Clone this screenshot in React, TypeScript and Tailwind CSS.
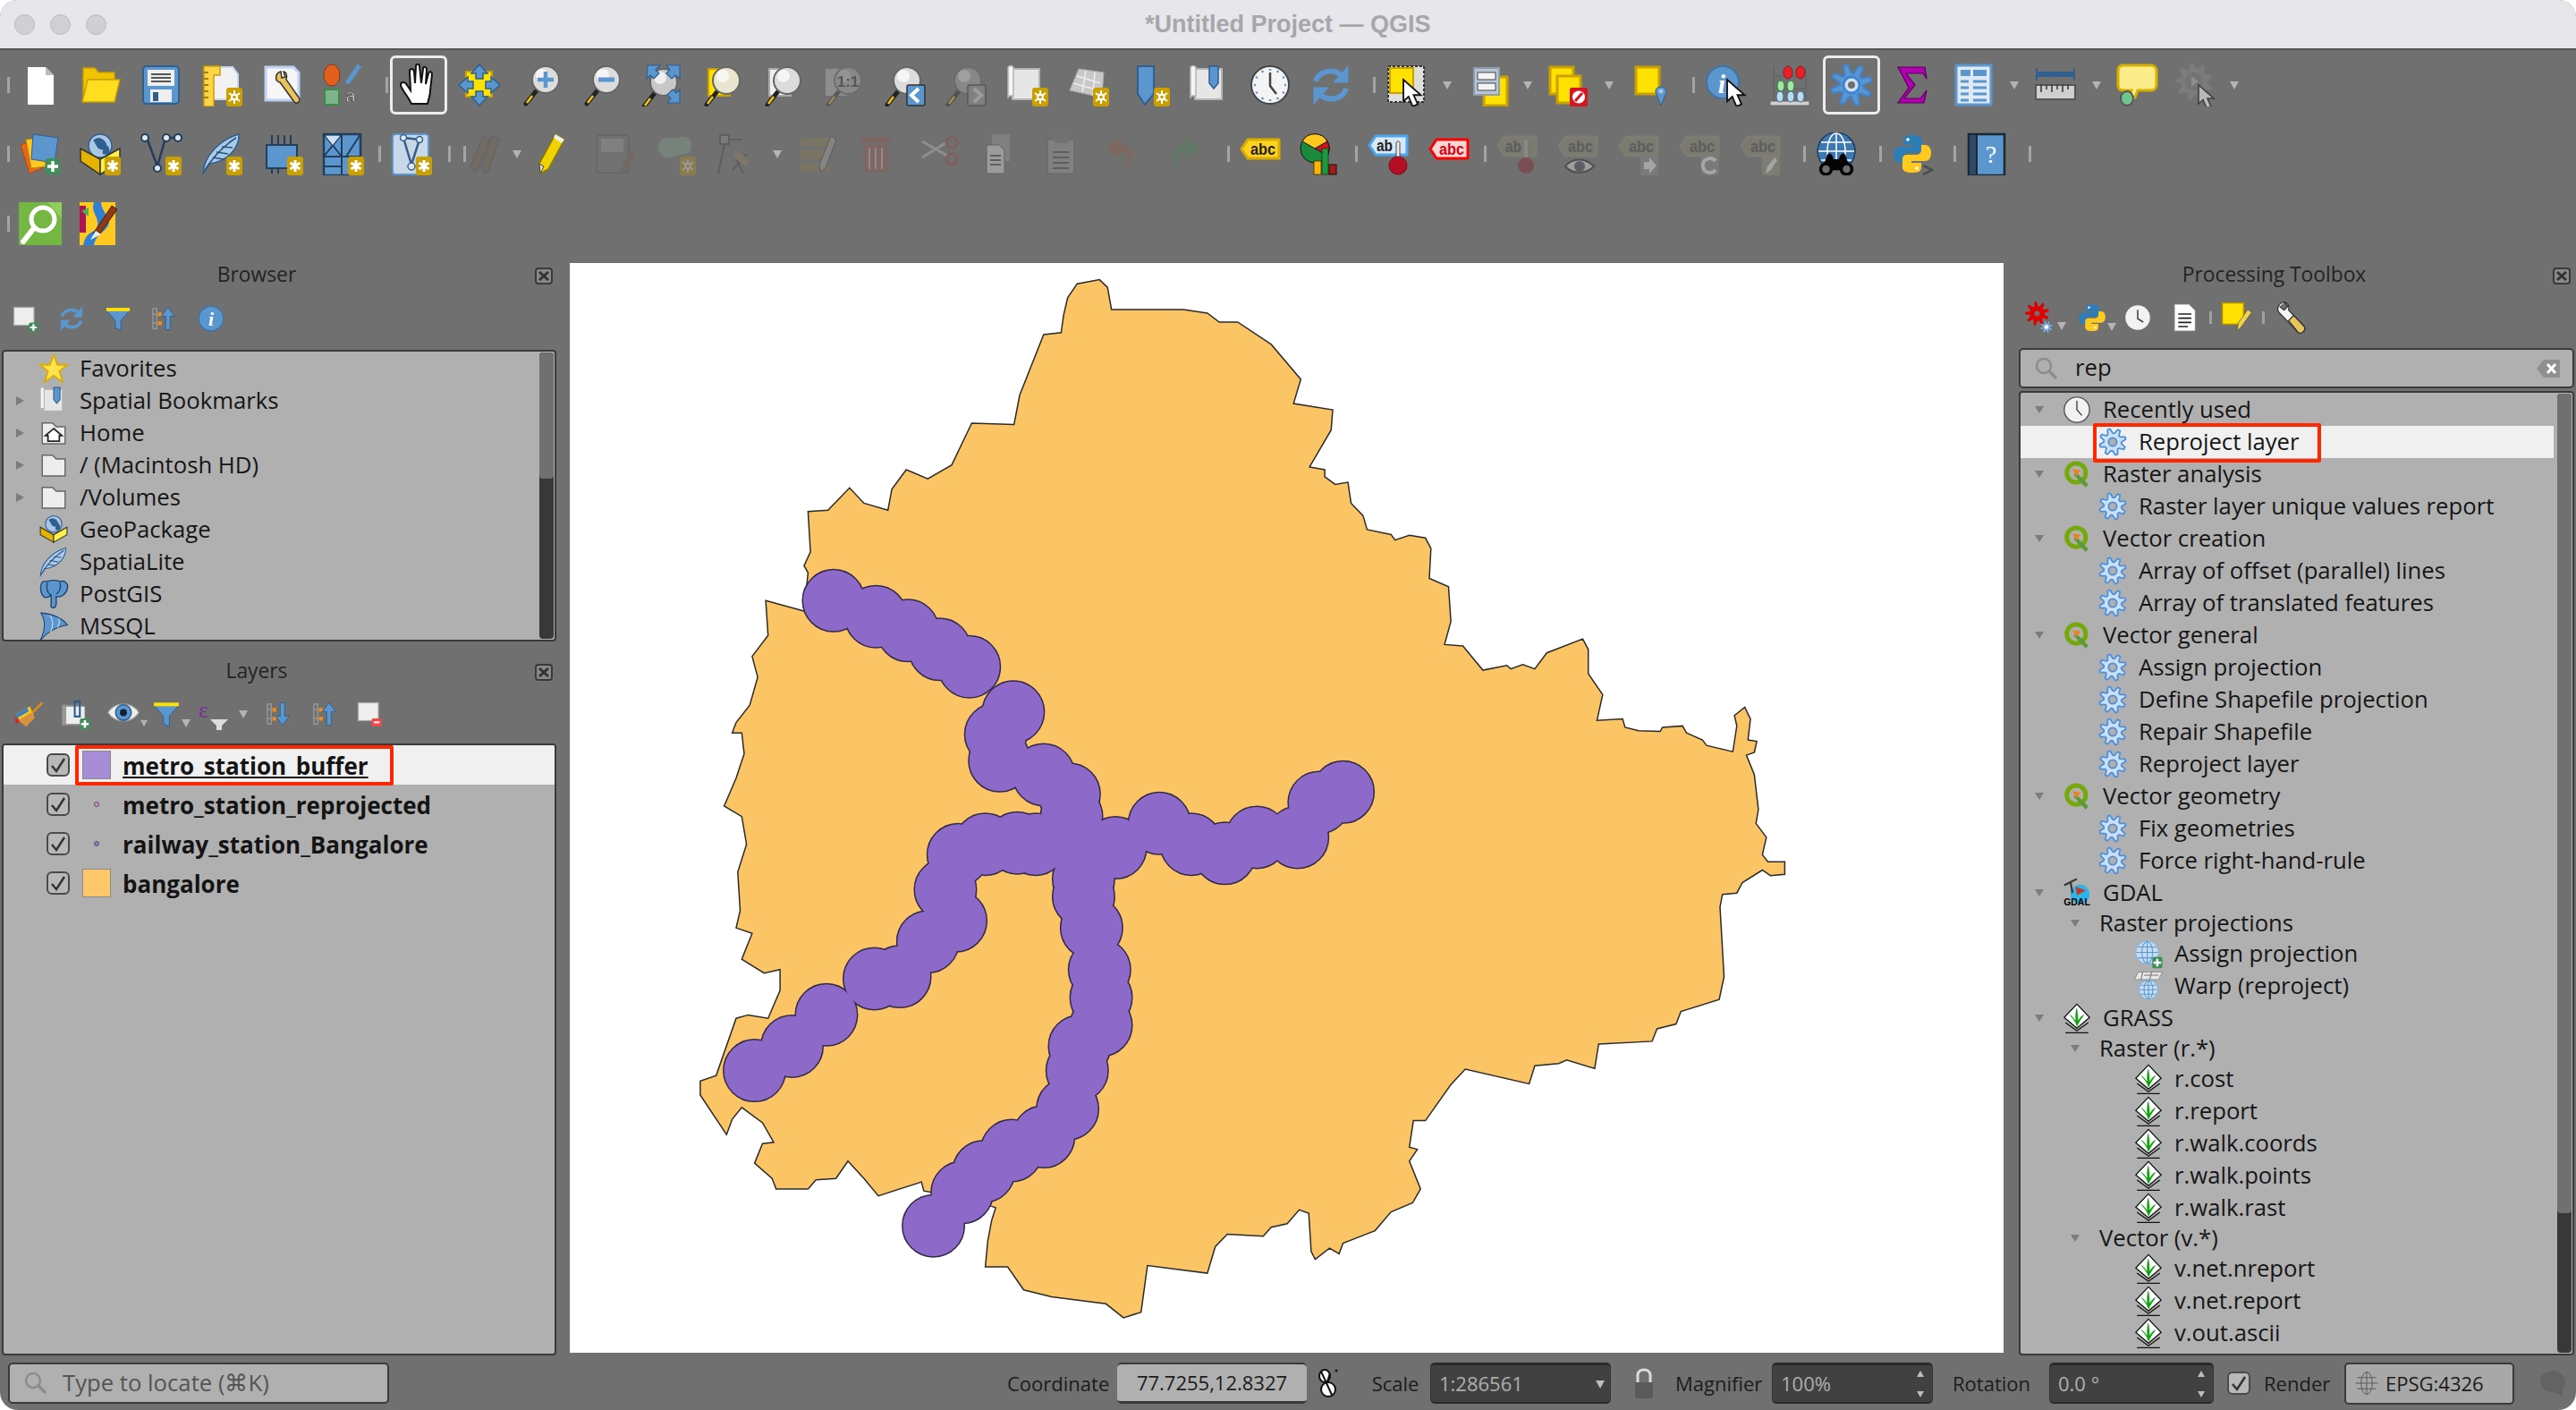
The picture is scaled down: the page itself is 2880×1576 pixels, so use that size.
import * as React from "react";

const UI = "[font-family:'Open_Sans',sans-serif]";

const Svg = ({ s = 48, children }: { s?: number; children: React.ReactNode }) => (
  <svg width={s} height={s} viewBox="0 0 48 48" className="block shrink-0">
    {children}
  </svg>
);

function gear(cx: number, cy: number, r: number, R: number, n: number) {
  let d = "";
  for (let i = 0; i < n * 4; i++) {
    const a = (i / (n * 4)) * Math.PI * 2 - Math.PI / 8;
    const rad = i % 4 < 2 ? R : r;
    d += `${i ? "L" : "M"}${(cx + Math.cos(a) * rad).toFixed(1)} ${(cy + Math.sin(a) * rad).toFixed(1)}`;
  }
  return d + "Z";
}

const BLUE = "#5b96cf";
const DARK = "#2f5f8f";

const Star = () => (
  <g>
    <rect x="29" y="27" width="18" height="21" rx="3" fill="#c9a000" />
    <path d="M38 31v13M32.5 34l11 7M43.5 34l-11 7" stroke="#fff" strokeWidth="3" />
  </g>
);
const GearBadge = ({ x = 0 }: { x?: number }) => (
  <g transform={`translate(${x} 0)`}>
    <rect x="29" y="27" width="18" height="21" rx="3" fill="#c9a000" />
    <path d="M38 30v15M32 33l12 9M44 33l-12 9" stroke="#fff" strokeWidth="2" />
    <circle cx="38" cy="37.5" r="4" fill="#fff" />
    <circle cx="38" cy="37.5" r="1.8" fill="#c9a000" />
  </g>
);
const Plus = ({ x = 38, y = 38 }: { x?: number; y?: number }) => (
  <g>
    <rect x={x - 8} y={y - 9} width="16" height="18" rx="3" fill="#3f8f58" />
    <path d={`M${x} ${y - 6}v12M${x - 6} ${y}h12`} stroke="#fff" strokeWidth="3.5" />
  </g>
);
const Cursor = ({ x, y, k = 1 }: { x: number; y: number; k?: number }) => (
  <path
    transform={`translate(${x} ${y}) scale(${k})`}
    d="M0 0V21L5 16.500L9 26L14 24L10 15H17Z"
    fill="#fff"
    stroke="#111"
    strokeWidth="1.600"
  />
);
const Mag = ({ lens = "#dcdcdc", hl = "#fff", cx = 29, cy = 19 }: { lens?: string; hl?: string; cx?: number; cy?: number }) => (
  <g>
    <path d={`M${cx - 10} ${cy + 12}L${cx - 22} ${cy + 27}`} stroke="#222" strokeWidth="5" strokeLinecap="round" />
    <path d={`M${cx - 15} ${cy + 18}L${cx - 21} ${cy + 26}`} stroke="#f5c518" strokeWidth="2.500" />
    <circle cx={cx} cy={cy} r="15" fill={lens} stroke="#666" strokeWidth="2" />
    <ellipse cx={cx - 4} cy={cy - 5} rx="7" ry="7" fill={hl} opacity=".7" />
  </g>
);
const Globe = ({ cx = 24, cy = 24, r = 14 }: { cx?: number; cy?: number; r?: number }) => (
  <g>
    <circle cx={cx} cy={cy} r={r} fill="#a9c6e4" stroke={DARK} strokeWidth="1.500" />
    <path
      d={`M${cx - r * 0.6} ${cy - r * 0.5}q${r * 0.5} -${r * 0.4} ${r * 0.9} 0t${r * 0.2} ${r * 0.7}t-${r * 0.7} 0z`}
      fill={DARK}
    />
    <path d={`M${cx + r * 0.3} ${cy - r * 0.1}q${r * 0.5} 0 ${r * 0.5} ${r * 0.5}t-${r * 0.6} ${r * 0.3}z`} fill={DARK} />
  </g>
);
const WireGlobe = ({ cx = 24, cy = 24, r = 16, st = "#fff" }: { cx?: number; cy?: number; r?: number; st?: string }) => (
  <g fill="none" stroke={st} strokeWidth="1.500">
    <ellipse cx={cx} cy={cy} rx={r * 0.5} ry={r} />
    <path d={`M${cx} ${cy - r}V${cy + r}M${cx - r} ${cy}H${cx + r}M${cx - r * 0.85} ${cy - r * 0.5}H${cx + r * 0.85}M${cx - r * 0.85} ${cy + r * 0.5}H${cx + r * 0.85}`} />
  </g>
);
const Scroll = () => (
  <g>
    <path d="M8 6H38V40H8Z" fill="#e6e6e6" stroke="#b4b4b4" strokeWidth="2" />
    <path d="M3 4q3 -3 6 0V36H6q-3 0 -3 3Z" fill="#f4f4f4" stroke="#b4b4b4" strokeWidth="1.500" />
  </g>
);
const Feather = () => (
  <g>
    <path d="M3 46C4 26 22 8 43 2C44 16 32 32 10 35Z" fill="#a9cbe9" stroke={DARK} strokeWidth="1.500" />
    <path d="M5 42C14 28 26 15 40 6M14 28l12 2M18 22l13 2M24 16l12 1" fill="none" stroke="#27527c" strokeWidth="1.500" />
  </g>
);
const Clock = () => (
  <g>
    <circle cx="24" cy="24" r="20" fill="#f2f2f2" stroke="#555" strokeWidth="2" />
    <path d="M24 10V24L32 33" fill="none" stroke="#444" strokeWidth="2" />
  </g>
);
const Folder = ({ x = 0 }: { x?: number }) => (
  <path d={`M${x + 6} 8H${x + 22}L${x + 28} 14H${x + 42}V41H${x + 6}Z`} fill="#ededed" stroke="#666" strokeWidth="2" />
);
const Python = () => (
  <g>
    <path d="M24 3C15 3 14 6 14 9V14H25V16H10C5 16 3 20 3 25S5 34 10 34H14V28C14 25 17 23 20 23H30C33 23 35 21 35 18V9C35 5 31 3 24 3Z" fill="#2f7db5" />
    <path d="M24 45C33 45 34 42 34 39V34H23V32H38C43 32 45 28 45 23S43 14 38 14H34V20C34 23 31 25 28 25H18C15 25 13 27 13 30V39C13 43 17 45 24 45Z" fill="#ffc91f" />
    <circle cx="19" cy="8" r="1.800" fill="#fff" />
    <circle cx="29" cy="40" r="1.800" fill="#fff" />
  </g>
);
const Tag = ({ bg, st, fg, t = "abc", y = 8 }: { bg: string; st: string; fg: string; t?: string; y?: number }) => (
  <g>
    <path d={`M10 ${y}H45V${y + 21}H10L3 ${y + 10.500}Z`} fill={bg} stroke={st} strokeWidth="3" strokeLinejoin="round" />
    <text x={t === "ab" ? 20 : 27} y={y + 16.500} textAnchor="middle" fontSize="18" fontWeight="700" fill={fg} fontFamily="'Liberation Sans',sans-serif" textLength={t === "ab" ? 18 : 28} lengthAdjust="spacingAndGlyphs">
      {t}
    </text>
  </g>
);
const Refresh = () => (
  <g fill="none" stroke={BLUE} strokeWidth="6">
    <path d="M7 20C10 9 26 4 37 14" />
    <path d="M41 28C38 39 22 44 11 34" />
    <path d="M43 3V21H27Z" fill={BLUE} strokeWidth="1" />
    <path d="M5 45V27H21Z" fill={BLUE} strokeWidth="1" />
  </g>
);
const TreeUp = ({ down = false }: { down?: boolean }) => (
  <g>
    <path d="M3 6H10V42H3M3 6V42M3 16H10M3 32H10" fill="none" stroke="#9c9c9c" strokeWidth="2" />
    <rect x="12" y="13" width="7" height="7" fill="#f08a1c" />
    <rect x="12" y="29" width="7" height="7" fill="#f08a1c" />
    <path d={down ? "M26 4H34V28H42L30 44L18 28H26Z" : "M26 44H34V20H42L30 4L18 20H26Z"} fill={BLUE} stroke={DARK} strokeWidth="1.500" />
  </g>
);
const Funnel = () => (
  <g>
    <path d="M3 9H45L29 28V46L19 40V28Z" fill={BLUE} stroke={DARK} strokeWidth="1.500" />
    <rect x="3" y="5" width="42" height="6" fill="#ffe100" />
  </g>
);
const Qgis = () => (
  <g>
    <circle cx="23" cy="22" r="15" fill="none" stroke="#75a80b" strokeWidth="7" />
    <path d="M22 20l20 20-4 5-19-20z" fill="#5d9b3a" />
    <path d="M17 16l13 2-7 9z" fill="#f0811a" />
  </g>
);
const Grass = () => (
  <g>
    <path d="M24 2L44 23L24 40L4 23Z" fill="#fff" stroke="#111" strokeWidth="1.800" />
    <path d="M24 38C22 28 14 22 12 18C18 22 20 26 22 28C21 20 22 12 24 7C25 14 26 20 26 28C28 24 31 20 36 18C32 24 27 30 24 38Z" fill="#0fa30f" />
    <path d="M6 31L24 44L42 31M6 47H42" fill="none" stroke="#111" strokeWidth="1.800" />
  </g>
);
const Gear = () => <path d={gear(24, 24, 14, 21, 8)} fill="#cddff2" stroke="#4a8fdc" strokeWidth="2.500" strokeLinejoin="round" />;
const TreeGear = () => (
  <g>
    <Gear />
    <circle cx="24" cy="24" r="6.500" fill="#b0b0b0" stroke="#4a8fdc" strokeWidth="2.500" />
  </g>
);
const Sep = ({ w }: { w: string }) => (
  <div className={`flex h-full items-center justify-end ${w}`}>
    <div className="h-[18px] w-[3px] bg-[#a4a4a4]" />
  </div>
);
const Drop = ({ w = "w-[24px]" }: { w?: string }) => (
  <div className={`flex h-full items-center justify-center ${w}`}>
    <svg width="10" height="10" viewBox="0 0 10 10" className="block">
      <path d="M0 1H10L5 10Z" fill="#b4b4b4" />
    </svg>
  </div>
);
const Ic = ({ w = "w-[68px]", children, on }: { w?: string; children: React.ReactNode; on?: boolean }) => (
  <div className={`flex h-full shrink-0 items-center justify-center ${w}`}>
    {on ? (
      <div className="flex h-[66px] w-[64px] items-center justify-center rounded-[6px] border-[3px] border-[#ececec]">{children}</div>
    ) : (
      children
    )}
  </div>
);
const Off = ({ children, o = 0.28 }: { children: React.ReactNode; o?: number }) => (
  <Svg>
    <g opacity={o}>{children}</g>
  </Svg>
);

function TopRow1() {
  return (
    <div className="flex h-[77px] pl-[8px]">
      <Sep w="w-[3px]" />
      <Ic w="w-[67px]"><Svg><path d="M10 4H30L39 13V46H10Z" fill="#fff" /><path d="M30 4L39 13H30Z" fill="#bbb" /></Svg></Ic>
      <Ic><Svg><path d="M5 5H18L22 10H40V18H11L5 42Z" fill="#f2c400" stroke="#c9a000" strokeWidth="1.500" /><path d="M10 18H46L40 43H4Z" fill="#ffdd1f" stroke="#c9a000" strokeWidth="1.500" /></Svg></Ic>
      <Ic><Svg><rect x="4" y="3" width="40" height="42" rx="4" fill={BLUE} stroke={DARK} strokeWidth="2" /><rect x="9" y="7" width="30" height="18" fill="#efefef" /><path d="M13 12H35M13 16H35M13 20H35" stroke="#555" strokeWidth="2" /><rect x="12" y="29" width="24" height="14" fill="#efefef" /><rect x="15" y="32" width="6" height="10" fill={DARK} /></Svg></Ic>
      <Ic><Svg><path d="M8 4H36L42 12V40H8Z" fill="#f2f2f2" stroke="#c8d8f0" strokeWidth="2" /><path d="M4 3H22V13H15V48H4Z" fill="#ffd447" stroke="#c9a000" strokeWidth="1.500" /><path d="M4 10H9M4 17H9M4 24H9M4 31H9M4 38H9" stroke="#a07f00" strokeWidth="2" /><GearBadge x={0} /></Svg></Ic>
      <Ic><Svg><path d="M5 4H36L42 10V41H5Z" fill="#f6f6f6" stroke="#bcd0f0" strokeWidth="3" /><path d="M22 9C15 11 15 20 21 21L37 43C40 46 45 42 42 38L28 18C30 12 27 9 25 9L27 15L23 16Z" fill="#e6c35c" stroke="#333" strokeWidth="1.500" /></Svg></Ic>
      <Ic><Svg><ellipse cx="11" cy="13" rx="9" ry="12" fill="#e3601c" stroke="#7d3d1a" strokeWidth="1" /><path d="M28 22L42 2" stroke={BLUE} strokeWidth="5" /><rect x="3" y="29" width="16" height="17" fill="#7fb48a" stroke="#3b8b4e" strokeWidth="2" /><text x="32" y="43" textAnchor="middle" fontSize="20" fill="#eee" fontFamily="'Liberation Sans',sans-serif" stroke="#333" strokeWidth=".6">a</text></Svg></Ic>
      <Sep w="w-[16px]" />
      <Ic on><Svg><path d="M16 45C12 36 4 28 4 24C4 20 9 20 11 24L15 30L14 9C14 5 18 5 19 9L20 22L21 3C21 0 25 0 25 3L27 22L29 6C29 3 33 3 33 7L32 23L35 11C36 8 39 9 39 12L37 30C37 36 35 40 34 45Z" fill="#fff" stroke="#111" strokeWidth="2" /></Svg></Ic>
      <Ic><Svg><rect x="9" y="9" width="29" height="28" fill="#ffe100" stroke="#c9a000" strokeWidth="2" /><path d="M24 1L33 11H28V17H20V11H15ZM24 47L33 37H28V31H20V37H15ZM1 24L11 15V20H17V28H11V33ZM47 24L37 15V20H31V28H37V33Z" fill={BLUE} stroke={DARK} strokeWidth="1.500" /></Svg></Ic>
      <Ic><Svg><Mag cx={30} cy={18} /><path d="M30 9V27M21 18H39" stroke={BLUE} strokeWidth="4.500" /></Svg></Ic>
      <Ic><Svg><Mag cx={30} cy={18} /><path d="M21 18H39" stroke={BLUE} strokeWidth="5" /></Svg></Ic>
      <Ic><Svg><Mag cx={26} cy={21} lens="#c8c8c8" /><path d="M8 2H22L17 7L21 11L15 17L11 13L7 17ZM44 2V17L39 13L35 17L29 11L33 7L29 2ZM44 44H30L34 39L30 35L36 29L40 33L44 29Z" fill={BLUE} stroke={DARK} strokeWidth="1.200" /></Svg></Ic>
      <Ic><Svg><rect x="8" y="6" width="24" height="30" fill="#ffe100" stroke="#c9a000" strokeWidth="2" /><Mag cx={28} cy={19} lens="#e9e5cf" /></Svg></Ic>
      <Ic><Svg><rect x="8" y="6" width="24" height="30" fill="#f0f0f0" stroke="#aaa" strokeWidth="2" /><Mag cx={28} cy={19} /></Svg></Ic>
      <Ic><Off><rect x="3" y="6" width="24" height="30" fill="#ddd" /><Mag cx={28} cy={19} lens="#ccc" /><text x="28" y="26" textAnchor="middle" fontSize="17" fontWeight="700" fill="#111" fontFamily="'Liberation Sans',sans-serif">1:1</text></Off></Ic>
      <Ic><Svg><Mag cx={26} cy={19} /><rect x="26" y="24" width="20" height="23" rx="2" fill={BLUE} stroke="#333" strokeWidth="1.500" /><path d="M39 28L31 35.500L39 43" fill="none" stroke="#fff" strokeWidth="4" /></Svg></Ic>
      <Ic><Off o={0.4}><Mag cx={26} cy={19} lens="#aaa" /><rect x="26" y="24" width="20" height="23" rx="2" fill="#999" stroke="#333" strokeWidth="1.500" /><path d="M33 28L41 35.500L33 43" fill="none" stroke="#ddd" strokeWidth="4" /></Off></Ic>
      <Ic><Svg><Scroll /><GearBadge x={1} /></Svg></Ic>
      <Ic><Svg><path d="M14 6L42 10L40 38L4 30Z" fill="#c8c8c8" stroke="#aaa" /><path d="M12 14L38 22M8 22L36 30M22 8L18 32M32 10L30 36" stroke="#eee" strokeWidth="1.500" fill="none" /><GearBadge x={1} /></Svg></Ic>
      <Ic><Svg><path d="M12 3H30V34L20 46L12 34Z" fill={BLUE} stroke={DARK} strokeWidth="2" /><GearBadge x={1} /></Svg></Ic>
      <Ic><Svg><Scroll /><path d="M24 3H34V22L29 28L24 22Z" fill={BLUE} stroke={DARK} strokeWidth="1.500" /></Svg></Ic>
      <Ic><Svg><circle cx="24" cy="24" r="21" fill="#f4f4f4" stroke="#444" strokeWidth="2" /><path d="M24 10V25L31 34" fill="none" stroke="#444" strokeWidth="2.500" /><path d="M24 6v2M24 40v2M6 24h2M40 24h2M33 8l-1 2M15 8l1 2M33 40l-1-2M15 40l1-2M40 15l-2 1M8 15l2 1M40 33l-2-1M8 33l2-1" stroke={BLUE} strokeWidth="2.500" /></Svg></Ic>
      <Ic><Svg><Refresh /></Svg></Ic>
      <Sep w="w-[16px]" />
      <Ic><Svg><rect x="4" y="3" width="40" height="40" fill="#dedede" stroke="#333" strokeWidth="2" strokeDasharray="3 2" /><rect x="6" y="5" width="26" height="28" fill="#ffe100" stroke="#c9a000" strokeWidth="2" /><Cursor x={21} y={18} k={1.150} /></Svg></Ic>
      <Drop w="w-[23px]" />
      <Ic w="w-[68px]"><Svg><rect x="20" y="15" width="26" height="32" fill="#ffe100" stroke="#c9a000" strokeWidth="3" /><rect x="9" y="5" width="28" height="30" fill="#b6c6d6" stroke="#8e9eae" strokeWidth="2" /><rect x="13" y="10" width="20" height="8" fill="#f4f4f4" stroke="#444" /><rect x="13" y="22" width="20" height="8" fill="#f4f4f4" stroke="#444" /></Svg></Ic>
      <Drop w="w-[22px]" />
      <Ic><Svg><rect x="4" y="4" width="26" height="30" fill="#ffe100" stroke="#c9a000" strokeWidth="3" /><rect x="12" y="14" width="26" height="30" fill="#ffe100" stroke="#c9a000" strokeWidth="3" /><rect x="26" y="27" width="20" height="21" rx="2" fill="#d5161f" /><circle cx="36" cy="37.500" r="7" fill="#fff" /><path d="M32 42L40 33" stroke="#d5161f" strokeWidth="3" /></Svg></Ic>
      <Drop />
      <Ic><Svg><rect x="8" y="4" width="26" height="30" fill="#ffe100" stroke="#c9a000" strokeWidth="3" /><path d="M36 47L30 32C29 24 42 24 42 32Z" fill={BLUE} stroke={DARK} strokeWidth="1" /><circle cx="36" cy="31" r="2.500" fill="#a9c6e4" /></Svg></Ic>
      <Sep w="w-[16px]" />
      <Ic w="w-[70px]"><Svg><circle cx="20" cy="21" r="18" fill={BLUE} stroke="#3e74a8" strokeWidth="2" /><text x="19" y="33" textAnchor="middle" fontSize="30" fontWeight="700" fontStyle="italic" fill="#fff" fontFamily="'Liberation Serif',serif">i</text><Cursor x={25} y={18} k={1.150} /></Svg></Ic>
      <Ic w="w-[71px]"><Svg><path d="M6 3V43M42 3V43M6 14H42M6 28H42" stroke="#666" strokeWidth="2" /><rect x="2" y="42" width="44" height="5" fill="#cfcfcf" stroke="#666" /><g stroke="#7d2020"><ellipse cx="22" cy="10" rx="5" ry="7" fill="#ee1c25" /><ellipse cx="36" cy="10" rx="5" ry="7" fill="#ee1c25" /></g><g stroke="#2d7a3b"><ellipse cx="14" cy="25" rx="4" ry="6" fill="#9fe89f" /><ellipse cx="25" cy="25" rx="4" ry="6" fill="#9fe89f" /></g><g stroke="#3d6a8f"><ellipse cx="13" cy="37" rx="4" ry="6" fill="#b8dcf2" /><ellipse cx="25" cy="37" rx="4" ry="6" fill="#b8dcf2" /><ellipse cx="36" cy="37" rx="4" ry="6" fill="#b8dcf2" /></g></Svg></Ic>
      <Ic on><Svg><path d={gear(24, 24, 13, 23, 8)} fill={BLUE} stroke="#3f85d6" strokeWidth="2" strokeLinejoin="round" /><circle cx="24" cy="24" r="9" fill="#cfe0f2" stroke="#3f85d6" strokeWidth="3" /><circle cx="24" cy="24" r="4" fill="#6e6e6e" /></Svg></Ic>
      <Ic><Svg><path d="M8 4H38L40 17L36 11H17L27 24L15 39H33L40 30L37 44H8L20 27Z" fill="#b000b0" stroke="#5a005a" strokeWidth="1.200" /></Svg></Ic>
      <Ic><Svg><rect x="5" y="2" width="39" height="44" fill="#dfe9f3" stroke={BLUE} strokeWidth="3" /><rect x="10" y="7" width="11" height="7" fill={BLUE} /><rect x="24" y="7" width="15" height="7" fill={BLUE} /><path d="M10 20H19M24 20H39M10 27H19M24 27H39M10 34H19M24 34H39M10 41H19M24 41H39" stroke={BLUE} strokeWidth="3" /></Svg></Ic>
      <Drop />
      <Ic><Svg><rect x="3" y="9" width="42" height="6" fill={DARK} /><path d="M3 5V19M45 5V19" stroke={DARK} strokeWidth="2" /><rect x="2" y="24" width="44" height="16" fill="#cfcfcf" stroke="#555" strokeWidth="2" /><path d="M8 24v8M14 24v5M20 24v8M26 24v5M32 24v8M38 24v5" stroke="#333" strokeWidth="1.500" /></Svg></Ic>
      <Drop />
      <Ic><Svg><path d="M8 2H38C42 2 45 4 45 8V24C45 28 42 30 38 30H24L21 38L12 43L17 30H8C4 30 2 28 2 24V8C2 4 4 2 8 2Z" fill="#fcec8a" stroke="#d8b000" strokeWidth="3" /><ellipse cx="12" cy="39" rx="7" ry="8" fill="#6fc58c" stroke="#555" strokeWidth="2" /></Svg></Ic>
      <Ic w="w-[62px]"><Off o={0.5}><path d={gear(22, 20, 15, 21, 9)} fill="#888" stroke="#777" /><circle cx="22" cy="20" r="10" fill="#777" /><path d="M19 14L27 20L19 26Z" fill="#aaa" /><Cursor x={27} y={24} k={1} /></Off></Ic>
      <Drop w="w-[24px]" />
    </div>
  );
}

const Abc = ({ children, t = "abc" }: { children?: React.ReactNode; t?: string }) => (
  <Ic>
    <Off o={0.42}>
      <Tag bg="#888872" st="#8f8f78" fg="#444" t={t} y={5} />
      {children}
    </Off>
  </Ic>
);

function TopRow2() {
  return (
    <div className="flex h-[78px] pl-[8px]">
      <Sep w="w-[3px]" />
      <Ic w="w-[67px]"><Svg><path d="M2 14L18 8L26 40L12 46Z" fill="#e8661c" stroke="#a8481a" /><path d="M8 8L26 6L30 38L14 40Z" fill="#ffc91f" stroke="#b68e00" /><path d="M16 2L44 6L40 34L14 30Z" fill={BLUE} stroke={DARK} /><Plus x={38} y={38} /></Svg></Ic>
      <Ic><Svg><Globe cx={24} cy={15} r={13} /><path d="M2 18L24 30V47L2 32Z" fill="#e6b400" stroke="#333" strokeWidth="1.500" /><path d="M46 18L24 30V47L46 32Z" fill="#fff04a" stroke="#333" strokeWidth="1.500" /><Star /></Svg></Ic>
      <Ic><Svg><path d="M8 6L20 38L29 6M29 6L42 6" fill="none" stroke="#233d5a" strokeWidth="2.500" /><circle cx="6" cy="6" r="4" fill="#dce8f3" stroke="#233d5a" strokeWidth="2" /><circle cx="20" cy="40" r="4" fill="#dce8f3" stroke="#233d5a" strokeWidth="2" /><circle cx="30" cy="6" r="4" fill="#dce8f3" stroke="#233d5a" strokeWidth="2" /><circle cx="43" cy="6" r="4" fill="#dce8f3" stroke="#233d5a" strokeWidth="2" /><Star /></Svg></Ic>
      <Ic><Svg><Feather /><Star /></Svg></Ic>
      <Ic><Svg><rect x="6" y="14" width="34" height="26" fill={BLUE} stroke="#233d5a" strokeWidth="2" /><path d="M12 3V14M19 3V14M26 3V14M33 3V14M12 40V46M19 40V46" stroke="#233d5a" strokeWidth="2" /><Star /></Svg></Ic>
      <Ic><Svg><rect x="2" y="2" width="41" height="46" fill={BLUE} stroke="#233d5a" strokeWidth="2.500" /><path d="M2 27H43M22 2V48M2 2L22 27M2 27L22 2M27 27L43 2M2 38H22" stroke="#233d5a" strokeWidth="2" /><path d="M4 4H20L12 14Z" fill="#cfe0f2" /><Star /></Svg></Ic>
      <Sep w="w-[8px]" />
      <Ic><Svg><rect x="3" y="2" width="40" height="45" rx="3" fill="#c8d8e8" stroke={BLUE} strokeWidth="2" /><path d="M15 6L24 36L33 8M15 6L33 8" fill="none" stroke="#345f88" strokeWidth="2.500" /><circle cx="15" cy="6" r="3.500" fill="#dce8f3" stroke="#345f88" strokeWidth="1.500" /><circle cx="33" cy="8" r="3.500" fill="#dce8f3" stroke="#345f88" strokeWidth="1.500" /><circle cx="24" cy="38" r="4" fill="#dce8f3" stroke="#345f88" strokeWidth="1.500" /><Star /></Svg></Ic>
      <Sep w="w-[10px]" />
      <Sep w="w-[17px]" />
      <Ic w="w-[50px]"><Off o={0.22}><path d="M8 44L4 38L18 4L26 8L12 42ZM20 46L16 40L28 4L36 8L24 44Z" fill="#7d5a3c" stroke="#333" /></Off></Ic>
      <Drop w="w-[14px]" />
      <Ic><Svg><path d="M9 46L8 35L26 2L36 8L18 41Z" fill="#f2d200" stroke="#8d7a00" strokeWidth="1.500" /><path d="M26 2L36 8L33 12L24 6Z" fill="#eee" /><path d="M9 46L8 35L13 38Z" fill="#ddd" stroke="#444" /></Svg></Ic>
      <Ic><Off><rect x="4" y="3" width="36" height="42" rx="4" fill="#777" stroke="#333" /><rect x="9" y="7" width="25" height="15" fill="#aaa" /><path d="M32 46L34 34L42 20L47 24L38 40Z" fill="#7d5a3c" /></Off></Ic>
      <Ic><Off><path d="M6 12C10 2 20 8 26 6C36 2 44 8 42 18C40 26 30 24 20 28C10 30 2 22 6 12Z" fill="#8bb09a" /><GearBadge x={0} /></Off></Ic>
      <Ic><Off><path d="M6 3H16V13H6ZM11 13L4 46M16 8H30M20 42L36 24M32 46L24 30" stroke="#333" strokeWidth="2" fill="#999" /><path d="M24 20L40 32L34 38L20 26Z" fill="#9c8a5c" /></Off></Ic>
      <Drop />
      <Ic><Off o={0.35}><rect x="4" y="6" width="32" height="10" fill="#8a7d50" /><rect x="4" y="20" width="32" height="10" fill="#8a7d50" /><rect x="4" y="34" width="32" height="10" fill="#8a7d50" /><path d="M26 44L25 36L38 4L44 8L32 40Z" fill="#aaa" stroke="#333" /></Off></Ic>
      <Ic><Off o={0.22}><rect x="4" y="5" width="32" height="6" fill="#b04a3a" /><path d="M6 14H34V44H6Z" fill="#b04a3a" /><path d="M13 17V41M20 17V41M27 17V41" stroke="#eee" strokeWidth="2" /></Off></Ic>
      <Ic><Off><path d="M4 10L32 26M4 28L30 12" stroke="#ddd" strokeWidth="3" /><circle cx="37" cy="11" r="6" fill="none" stroke="#b03030" strokeWidth="2.500" /><circle cx="37" cy="30" r="6" fill="none" stroke="#b03030" strokeWidth="2.500" /></Off></Ic>
      <Ic><Off o={0.4}><rect x="14" y="2" width="20" height="30" fill="#999" /><path d="M8 14H22L28 20V46H8Z" fill="#ddd" stroke="#444" /><path d="M12 26H24M12 31H24M12 36H24" stroke="#444" strokeWidth="2" /></Off></Ic>
      <Ic><Off o={0.4}><rect x="8" y="8" width="30" height="38" fill="#999" stroke="#555" /><rect x="16" y="2" width="16" height="10" fill="#777" /><path d="M14 22H32M14 28H32M14 34H32M14 40H32" stroke="#444" strokeWidth="2" /></Off></Ic>
      <Ic><Off o={0.3}><path d="M22 4L6 18L22 30V22C30 22 34 28 28 40C40 34 40 14 22 12Z" fill="#9c5b3c" /></Off></Ic>
      <Ic><Off o={0.3}><path d="M26 4L42 18L26 30V22C18 22 14 28 20 40C8 34 8 14 26 12Z" fill="#4a8a5a" /></Off></Ic>
      <Sep w="w-[18px]" />
      <Ic><Svg><Tag bg="#ffd21f" st="#d8ac00" fg="#222" /></Svg></Ic>
      <Ic w="w-[63px]"><Svg><circle cx="19" cy="18" r="16" fill="#1a8a3c" stroke="#111" /><path d="M19 18L19 2A16 16 0 0 1 33 26Z" fill="#c8161c" stroke="#111" /><path d="M19 18L5 10A16 16 0 0 1 33 10Z" fill="#ffc91f" stroke="#111" /><rect x="18" y="32" width="8" height="15" fill="#ffb400" stroke="#111" strokeWidth=".6" /><rect x="27" y="18" width="7" height="29" fill="#1a9a3c" stroke="#111" strokeWidth=".6" /><rect x="35" y="36" width="8" height="11" fill="#a81a1a" stroke="#111" /></Svg></Ic>
      <Sep w="w-[12px]" />
      <Ic><Svg><Tag bg="#d8e8f6" st="#4ba6ec" fg="#222" t="ab" y={4} /><path d="M33 13C32 9 38 9 37 13V30H33Z" fill="#eee" stroke="#444" /><circle cx="35" cy="37" r="10" fill="#b50f23" stroke="#7a0a18" /></Svg></Ic>
      <Ic><Svg><Tag bg="#fbd8d8" st="#f00" fg="#e0000c" /></Svg></Ic>
      <Sep w="w-[8px]" />
      <Abc t="ab"><path d="M32 11C31 7 37 7 36 11V28H32Z" fill="#aaa" /><circle cx="34" cy="37" r="9" fill="#8a2030" /></Abc>
      <Abc><path d="M10 38C18 28 32 28 42 38C32 47 18 47 10 38Z" fill="#ddd" stroke="#222" strokeWidth="2" /><circle cx="26" cy="38" r="6" fill="#445" /></Abc>
      <Abc><rect x="26" y="26" width="20" height="22" rx="2" fill="#888" /><path d="M30 33H36V28L44 37L36 46V41H30Z" fill="#eee" /></Abc>
      <Abc><rect x="26" y="26" width="20" height="22" rx="2" fill="#888" /><path d="M42 32A8 8 0 1 0 42 42" fill="none" stroke="#eee" strokeWidth="4" /></Abc>
      <Abc><rect x="26" y="26" width="20" height="22" rx="2" fill="#8f8f78" /><path d="M30 46L32 38L40 28L43 31L36 42Z" fill="#eee" /></Abc>
      <Sep w="w-[17px]" />
      <Ic><Svg><circle cx="24" cy="21" r="21" fill="#3f78b0" stroke="#1c3e60" strokeWidth="1.500" /><WireGlobe cx={24} cy={21} r={20} /><path d="M8 42L14 25C16 22 20 24 21 30H27C28 24 32 22 34 25L40 42Z" fill="#050505" /><circle cx="12.500" cy="41" r="6" fill="#6e6e6e" stroke="#050505" strokeWidth="3.500" /><circle cx="35.500" cy="41" r="6" fill="#6e6e6e" stroke="#050505" strokeWidth="3.500" /></Svg></Ic>
      <Sep w="w-[17px]" />
      <Ic><Svg><Python /><path d="M36 37L46 42L36 47" fill="none" stroke="#4c4c4c" strokeWidth="2.500" /></Svg></Ic>
      <Sep w="w-[15px]" />
      <Ic><Svg><rect x="4" y="2" width="40" height="46" fill={BLUE} stroke="#1b2733" strokeWidth="2.500" /><rect x="4" y="2" width="9" height="46" fill="#2f4a66" stroke="#1b2733" strokeWidth="2" /><text x="29" y="34" textAnchor="middle" fontSize="28" fill="#fff" fontFamily="'Liberation Serif',serif">?</text></Svg></Ic>
      <Sep w="w-[16px]" />
    </div>
  );
}

function TopRow3() {
  return (
    <div className="flex h-[78px] pl-[8px]">
      <Sep w="w-[3px]" />
      <Ic w="w-[67px]"><Svg><rect x="0" y="0" width="48" height="48" fill="#74b843" /><path d="M32 0L48 0V18Z" fill="#8fce5a" /><circle cx="27" cy="19" r="13" fill="none" stroke="#fff" strokeWidth="5" /><path d="M17 29L5 44" stroke="#fff" strokeWidth="6" strokeLinecap="round" /></Svg></Ic>
      <Ic w="w-[66px]"><Svg><rect x="2" y="0" width="40" height="48" fill="#ffc91f" /><path d="M2 4H9V34H2Z" fill="#b0144f" /><path d="M18 0C14 12 24 16 22 26S10 30 6 48H18C20 36 30 34 34 26S26 10 26 0Z" fill="#2f7fd5" /><path d="M4 10L12 6L12 16Z" fill="#4caf50" /><path d="M18 34L38 4L44 8L24 36L18 36Z" fill="#8f3a14" stroke="#4a1e08" /><path d="M14 42L20 32L26 36Z" fill="#eee" /></Svg></Ic>
    </div>
  );
}

const CloseBtn = () => (
  <svg width="22" height="22" viewBox="0 0 22 22" className="ml-[25px] mr-[3px] block shrink-0">
    <rect x="2" y="3" width="18" height="17" rx="3" fill="#888" stroke="#3a3a3a" strokeWidth="2" />
    <path d="M6 7L16 16M16 7L6 16" stroke="#333" strokeWidth="3" />
  </svg>
);

function DockHead({ title, mt = "" }: { title: string; mt?: string }) {
  return (
    <div className={`flex h-[27px] items-center ${mt}`}>
      <span className="flex-1 text-center text-[22.800px] text-[#242424]">{title}</span>
      <CloseBtn />
    </div>
  );
}

const Arrow = ({ down }: { down?: boolean }) => (
  <svg width="16" height="16" viewBox="0 0 16 16" className="block shrink-0">
    {down ? <path d="M3 4H13L8 12Z" fill="#7c7c7c" /> : <path d="M4 3L13 8L4 13Z" fill="#7c7c7c" />}
  </svg>
);

const Scrollbar = ({ thumb }: { thumb: string }) => (
  <div className="my-[1px] ml-[4px] mr-[1px] flex w-[16px] shrink-0 flex-col overflow-hidden rounded-[4px] bg-[#383838]">
    <div className={`rounded-[4px] bg-[#707070] ${thumb}`} />
  </div>
);

const browserRows: { t: string; arrow?: boolean; ic: React.ReactNode }[] = [
  { t: "Favorites", ic: <path d="M24 2L30 18H46L33 28L38 45L24 35L10 45L15 28L2 18H18Z" fill="#ffe14a" stroke="#d8ac00" strokeWidth="2.500" /> },
  { t: "Spatial Bookmarks", arrow: true, ic: <g><Scroll /><path d="M24 3H34V22L29 28L24 22Z" fill={BLUE} stroke={DARK} strokeWidth="1.500" /></g> },
  { t: "Home", arrow: true, ic: <g><Folder /><path d="M24 17L37 28H33V37H15V28H11Z" fill="#fff" stroke="#222" strokeWidth="2.500" /></g> },
  { t: "/ (Macintosh HD)", arrow: true, ic: <Folder /> },
  { t: "/Volumes", arrow: true, ic: <Folder /> },
  { t: "GeoPackage", ic: <g><Globe cx={24} cy={15} r={13} /><path d="M3 20L24 32V44L3 32Z" fill="#e6b400" stroke="#333" strokeWidth="1.500" /><path d="M45 20L24 32V44L45 32Z" fill="#fff04a" stroke="#333" strokeWidth="1.500" /></g> },
  { t: "SpatiaLite", ic: <Feather /> },
  { t: "PostGIS", ic: <g><path d="M8 4C2 6 2 22 8 28C12 32 16 28 20 26V44C24 48 28 44 28 40V28C36 30 44 24 46 14C47 6 40 2 34 4C28 2 20 2 14 4Z" fill={BLUE} stroke="#1e456b" strokeWidth="2" /><path d="M14 6C12 14 14 22 20 26M34 6C36 14 34 20 28 24" fill="none" stroke="#1e456b" strokeWidth="2" /></g> },
  { t: "MSSQL", ic: <g><path d="M4 3C20 4 36 10 46 22C30 24 14 34 3 46C10 32 12 16 4 3Z" fill={BLUE} stroke="#1e456b" strokeWidth="1.500" /><path d="M18 7C24 14 24 22 19 34M32 12C34 18 33 20 30 26" fill="none" stroke="#cfe0f2" strokeWidth="1.500" /></g> },
];

function BrowserPanel() {
  return (
    <>
      <DockHead title="Browser" />
      <div className="flex h-[70px] items-center">
        {[
          <g key="a"><rect x="4" y="4" width="36" height="32" fill="#eee" stroke="#aaa" strokeWidth="2" /><Plus x={39} y={40} /></g>,
          <Refresh key="b" />,
          <Funnel key="c" />,
          <TreeUp key="d" />,
          <g key="e"><circle cx="24" cy="24" r="22" fill={BLUE} stroke="#3e74a8" strokeWidth="2" /><text x="24" y="37" textAnchor="middle" fontSize="34" fontWeight="700" fontStyle="italic" fill="#fff" fontFamily="'Liberation Serif',serif">i</text></g>,
        ].map((g, i) => (
          <div key={i} className="flex w-[52px] justify-center"><Svg s={30}>{g}</Svg></div>
        ))}
      </div>
      <div className="flex h-[326px] overflow-hidden rounded-[4px] border-2 border-[#3a3a3a] bg-[#b0b0b0]">
        <div className="min-w-0 flex-1 pt-[1px]">
          {browserRows.map((r) => (
            <div key={r.t} className="flex h-[36px] items-center pl-[10px]">
              <div className="w-[16px] shrink-0">{r.arrow && <Arrow />}</div>
              <div className="ml-[13px] mr-[12px] w-[34px] shrink-0"><Svg s={34}>{r.ic}</Svg></div>
              <span className="whitespace-nowrap text-[25.700px] text-[#161616]">{r.t}</span>
            </div>
          ))}
        </div>
        <Scrollbar thumb="h-[141px]" />
      </div>
    </>
  );
}

const Check = () => (
  <svg width="26" height="26" viewBox="0 0 26 26" className="block shrink-0">
    <rect x="1" y="1" width="24" height="24" rx="5" fill="#b8b8b8" stroke="#4a4a4a" strokeWidth="2" />
    <path d="M6 14L11 20L20 6" fill="none" stroke="#333" strokeWidth="2.500" />
  </svg>
);

function LayerRow({ name, swatch, dot, sel }: { name: string; swatch?: string; dot?: string; sel?: boolean }) {
  return (
    <div className={`relative flex h-[44px] items-center pl-[48px] ${sel ? "bg-[#f0f0f0]" : ""}`}>
      <Check />
      <div className="ml-[14px] mr-[13px] flex h-[32px] w-[32px] shrink-0 items-center justify-center">
        {swatch ? (
          <div className={`h-[32px] w-[32px] border border-[#8a8a8a] ${swatch}`} />
        ) : (
          <div className={`h-[6px] w-[6px] rounded-full border border-[#555] ${dot}`} />
        )}
      </div>
      <span className={`whitespace-nowrap pt-[2px] text-[26px] font-bold text-[#141414] ${sel ? "underline" : ""}`}>{name}</span>
      {sel && <div className="absolute left-[80px] top-0 h-[45px] w-[356px] rounded-[2px] border-[4px] border-[#ff2600]" />}
    </div>
  );
}

function LayersPanel() {
  return (
    <>
      <DockHead title="Layers" mt="mt-[20px]" />
      <div className="flex h-[67px] items-center">
        <div className="ml-[13px] w-[34px]"><Svg s={34}><path d="M4 24L26 12L32 26L12 38Z" fill="#f5c518" /><path d="M4 24L22 14L24 20L6 30Z" fill="#3f7fc5" /><path d="M8 34L28 22L34 30L20 44Z" fill="#d9923f" /><path d="M30 22L46 6" stroke="#d98a1f" strokeWidth="4" /><path d="M2 28L10 36L4 40Z" fill="#e02020" /></Svg></div>
        <div className="ml-[19px] w-[34px]"><Svg s={34}><rect x="2" y="10" width="32" height="32" fill="#999" stroke="#888" /><rect x="8" y="12" width="30" height="28" fill="#eee" stroke="#888" /><path d="M22 4H30V28H22Z" fill="none" stroke={DARK} strokeWidth="3" /><Plus x={38} y={40} /></Svg></div>
        <div className="ml-[17px] flex w-[46px]"><Svg s={38}><path d="M2 22C12 6 36 6 46 22C36 38 12 38 2 22Z" fill="#eee" stroke="#999" strokeWidth="1.500" /><circle cx="24" cy="22" r="11" fill={BLUE} stroke="#2f5f8f" strokeWidth="2" /><circle cx="24" cy="22" r="5" fill="#123" /></Svg><div className="mt-[20px]"><Drop w="w-[8px]" /></div></div>
        <div className="ml-[5px] flex w-[46px]"><Svg s={32}><Funnel /></Svg><div className="mt-[20px]"><Drop w="w-[12px]" /></div></div>
        <div className="ml-[5px] flex w-[36px]"><svg width="36" height="36" viewBox="0 0 36 36" className="block"><text x="1" y="22" fontSize="26" fill="#7a2f8f" fontFamily="'Liberation Serif',serif">ε</text><path d="M14 24H34L27 31V36H21V31Z" fill="#ddd" /></svg></div>
        <Drop w="w-[30px]" />
        <div className="ml-[10px] w-[30px]"><Svg s={30}><TreeUp down /></Svg></div>
        <div className="ml-[22px] w-[30px]"><Svg s={30}><TreeUp /></Svg></div>
        <div className="ml-[19px] w-[30px]"><Svg s={30}><rect x="4" y="4" width="36" height="32" fill="#eee" stroke="#aaa" strokeWidth="2" /><rect x="28" y="32" width="18" height="14" rx="3" fill="#f04a4a" /><path d="M32 39H42" stroke="#fff" strokeWidth="3" /></Svg></div>
      </div>
      <div className="h-[684px] overflow-hidden rounded-[4px] border-2 border-[#3a3a3a] bg-[#b0b0b0]">
        <LayerRow name="metro_station_buffer" swatch="bg-[#a78cd6]" sel />
        <LayerRow name="metro_station_reprojected" dot="bg-[#d48ad4]" />
        <LayerRow name="railway_station_Bangalore" dot="bg-[#8d7ad4]" />
        <LayerRow name="bangalore" swatch="bg-[#fdc76a]" />
      </div>
    </>
  );
}

const outline: [number, number][] = [
  [612, 105], [615, 80], [620, 55], [632, 35], [660, 29], [670, 40], [675, 72], [735, 72], [765, 72], [795, 77], [810, 90], [833, 90], [875, 122], [912, 172], [903, 207], [952, 216], [950, 245], [923, 298], [942, 302], [942, 312], [955, 323], [971, 320], [975, 350], [990, 368], [995, 388], [1025, 395], [1030, 403], [1048, 396], [1068, 400], [1075, 415], [1073, 458], [1097, 470], [1100, 520], [1092, 553], [1115, 555], [1140, 590], [1170, 583], [1175, 588], [1190, 582], [1205, 588], [1220, 565], [1265, 545], [1272, 560], [1272, 595], [1290, 625], [1283, 662], [1315, 660], [1318, 672], [1335, 677], [1362, 678], [1365, 672], [1390, 670], [1395, 680], [1415, 690], [1420, 698], [1453, 707], [1458, 670], [1455, 655], [1468, 643], [1475, 660], [1472, 690], [1483, 692], [1480, 708], [1470, 712], [1480, 740], [1485, 790], [1482, 810], [1495, 830], [1490, 855], [1497, 865], [1518, 865], [1518, 883], [1500, 885], [1490, 877], [1465, 895], [1458, 910], [1440, 912], [1437, 930], [1442, 1030], [1436, 1063], [1388, 1080], [1382, 1098], [1358, 1105], [1352, 1123], [1285, 1127], [1280, 1162], [1245, 1150], [1235, 1155], [1205, 1158], [1198, 1184], [1118, 1163], [1100, 1185], [1068, 1237], [1053, 1237], [1048, 1275], [1058, 1278], [1048, 1295], [1062, 1335], [1052, 1355], [1025, 1368], [1005, 1395], [965, 1413], [960, 1428], [948, 1420], [930, 1436], [925, 1425], [922, 1370], [910, 1365], [895, 1385], [875, 1390], [865, 1403], [820, 1400], [805, 1418], [795, 1456], [720, 1445], [712, 1512], [690, 1520], [668, 1500], [600, 1490], [565, 1480], [545, 1447], [517, 1447], [520, 1410], [525, 1380], [530, 1362], [500, 1350], [440, 1338], [437, 1325], [383, 1345], [365, 1320], [345, 1295], [330, 1320], [305, 1322], [295, 1335], [255, 1335], [250, 1320], [228, 1298], [238, 1270], [252, 1268], [238, 1240], [212, 1218], [200, 1235], [193, 1257], [160, 1200], [160, 1180], [180, 1172], [205, 1090], [220, 1085], [245, 1090], [260, 1050], [260, 1020], [240, 1025], [212, 1005], [225, 968], [205, 960], [210, 935], [207, 880], [218, 840], [212, 800], [190, 785], [205, 745], [215, 710], [212, 680], [200, 680], [205, 665], [222, 640], [232, 600], [225, 570], [245, 540], [242, 490], [290, 505], [295, 450], [290, 440], [298, 420], [295, 362], [320, 360], [347, 328], [365, 350], [395, 360], [400, 330], [418, 302], [445, 315], [475, 295], [500, 235], [553, 237], [560, 195], [590, 108],
];
const buffers: [number, number][] = [
  [327, 490], [380, 513], [420, 533], [460, 560], [497, 585],
  [552, 650], [530, 682], [535, 720], [590, 740], [622, 768], [625, 800], [640, 850],
  [580, 840], [557, 838], [517, 840], [483, 855], [467, 905], [480, 950], [445, 980], [410, 1030], [378, 1033],
  [318, 1085], [275, 1130], [228, 1165],
  [680, 845], [735, 810], [775, 840], [817, 853], [857, 830], [908, 830], [935, 780], [965, 765],
  [640, 890], [640, 915], [650, 960], [660, 1020], [662, 1060], [662, 1100], [635, 1130], [632, 1165], [620, 1220], [590, 1260], [550, 1280], [515, 1310], [488, 1340], [452, 1388],
];
const px = (x: number) => 3 + x / 1.12;
const py = (y: number) => -4 + y / 1.285;

function MapCanvas() {
  return (
    <div className="h-[1218px] w-[1603px] shrink-0 bg-white">
      <svg width="1603" height="1218" viewBox="0 0 1603 1218" className="block">
        <polygon points={outline.map(([x, y]) => `${px(x).toFixed(1)},${py(y).toFixed(1)}`).join(" ")} fill="#fbc566" stroke="#2b2b2b" strokeWidth="1.500" />
        {buffers.map(([x, y], i) => (
          <circle key={i} cx={px(x)} cy={py(y)} r="34.500" fill="#8d69c9" stroke="#332a4a" strokeWidth="2" />
        ))}
        {buffers.map(([x, y], i) => (
          <circle key={i} cx={px(x)} cy={py(y)} r="34" fill="#8d69c9" />
        ))}
      </svg>
    </div>
  );
}

type Kind = "group" | "leaf1" | "sub" | "leaf2";
const GRASS = <Grass />;
const toolRows: { k: Kind; t: string; ic?: React.ReactNode; sel?: boolean }[] = [
  { k: "group", t: "Recently used", ic: <Clock /> },
  { k: "leaf1", t: "Reproject layer", sel: true },
  { k: "group", t: "Raster analysis", ic: <Qgis /> },
  { k: "leaf1", t: "Raster layer unique values report" },
  { k: "group", t: "Vector creation", ic: <Qgis /> },
  { k: "leaf1", t: "Array of offset (parallel) lines" },
  { k: "leaf1", t: "Array of translated features" },
  { k: "group", t: "Vector general", ic: <Qgis /> },
  { k: "leaf1", t: "Assign projection" },
  { k: "leaf1", t: "Define Shapefile projection" },
  { k: "leaf1", t: "Repair Shapefile" },
  { k: "leaf1", t: "Reproject layer" },
  { k: "group", t: "Vector geometry", ic: <Qgis /> },
  { k: "leaf1", t: "Fix geometries" },
  { k: "leaf1", t: "Force right-hand-rule" },
  {
    k: "group",
    t: "GDAL",
    ic: (
      <g>
        <circle cx="29" cy="26" r="15" fill="#2fb4e8" />
        <path d="M4 12L24 2M14 7L17 24" stroke="#333" strokeWidth="3" />
        <path d="M22 14L38 20L24 28Z" fill="#c0392b" />
        <text x="24" y="44" textAnchor="middle" fontSize="15" fontWeight="700" fill="#000" fontFamily="'Liberation Sans',sans-serif" textLength="42" lengthAdjust="spacingAndGlyphs">GDAL</text>
      </g>
    ),
  },
  { k: "sub", t: "Raster projections" },
  { k: "leaf2", t: "Assign projection", ic: <g><circle cx="22" cy="22" r="18" fill="#c6def4" stroke="#8ab4dc" strokeWidth="1.500" /><WireGlobe cx={22} cy={22} r={17} st="#5b96cf" /><Plus x={38} y={38} /></g> },
  { k: "leaf2", t: "Warp (reproject)", ic: <g><circle cx="24" cy="30" r="15" fill="#c6def4" stroke="#8ab4dc" strokeWidth="1.500" /><WireGlobe cx={24} cy={30} r={14} st="#5b96cf" /><path d="M8 2H46L40 14H2Z" fill="#e6e6e6" stroke="#777" strokeWidth="1" /><path d="M15 2L12 14M29 2L26 14M17 7H40" stroke="#777" strokeWidth="1.500" /></g> },
  { k: "group", t: "GRASS", ic: GRASS },
  { k: "sub", t: "Raster (r.*)" },
  { k: "leaf2", t: "r.cost", ic: GRASS },
  { k: "leaf2", t: "r.report", ic: GRASS },
  { k: "leaf2", t: "r.walk.coords", ic: GRASS },
  { k: "leaf2", t: "r.walk.points", ic: GRASS },
  { k: "leaf2", t: "r.walk.rast", ic: GRASS },
  { k: "sub", t: "Vector (v.*)" },
  { k: "leaf2", t: "v.net.nreport", ic: GRASS },
  { k: "leaf2", t: "v.net.report", ic: GRASS },
  { k: "leaf2", t: "v.out.ascii", ic: GRASS },
];

function ToolRow({ k, t, ic, sel }: { k: Kind; t: string; ic?: React.ReactNode; sel?: boolean }) {
  const icon = <div className="mr-[12px] w-[34px] shrink-0"><Svg s={34}>{ic ?? <TreeGear />}</Svg></div>;
  const text = <span className="whitespace-nowrap text-[25.700px] text-[#161616]">{t}</span>;
  if (k === "group")
    return (
      <div className="flex h-[36px] items-center pl-[13px]">
        <div className="mr-[17px]"><Arrow down /></div>
        {icon}
        {text}
      </div>
    );
  if (k === "sub")
    return (
      <div className="flex h-[32px] items-center pl-[53px]">
        <div className="mr-[19px]"><Arrow down /></div>
        {text}
      </div>
    );
  return (
    <div className={`relative flex h-[36px] items-center ${k === "leaf1" ? "pl-[86px]" : "pl-[126px]"} ${sel ? "bg-[#f0f0f0]" : ""}`}>
      {icon}
      {text}
      {sel && <div className="absolute left-[81px] top-[-3px] h-[44px] w-[255px] rounded-[2px] border-[4px] border-[#ff2600]" />}
    </div>
  );
}

function ToolboxPanel() {
  return (
    <>
      <DockHead title="Processing Toolbox" />
      <div className="flex h-[68px] items-center pl-[7px]">
        <div className="flex w-[58px] items-end"><svg width="36" height="36" viewBox="0 0 48 48" className="block shrink-0"><path d={gear(18, 18, 11, 18, 9)} fill="#e00000" /><circle cx="18" cy="18" r="4" fill="#6e6e6e" /><path d={gear(32, 38, 5, 9, 8)} fill="#7db0e8" /><circle cx="32" cy="38" r="3" fill="#fff" /></svg><div className="mb-[4px]"><Drop w="w-[10px]" /></div></div>
        <div className="flex w-[44px] items-end"><Svg s={34}><Python /></Svg><div className="mb-[2px]"><Drop w="w-[10px]" /></div></div>
        <div className="flex w-[48px] justify-center"><Svg s={30}><circle cx="24" cy="24" r="22" fill="#f2f2f2" /><path d="M24 10V26L34 32" fill="none" stroke="#444" strokeWidth="2.500" /></Svg></div>
        <div className="flex w-[56px] justify-center"><Svg s={32}><path d="M8 2H32L42 12V46H8Z" fill="#fff" stroke="#bbb" /><path d="M14 18H36M14 25H36M14 32H36M14 39H30" stroke="#222" strokeWidth="2.500" /></Svg></div>
        <div className="h-[14px] w-[3px] bg-[#a0a0a0]" />
        <div className="flex w-[56px] justify-center"><Svg s={36}><rect x="2" y="2" width="32" height="32" fill="#ffe100" stroke="#a98f00" strokeWidth="2" /><path d="M24 44L26 32L40 12L46 16L30 38Z" fill="#f2d24a" stroke="#555" /></Svg></div>
        <div className="h-[14px] w-[3px] bg-[#a0a0a0]" />
        <div className="ml-[10px]"><Svg s={40}><path d="M15 3C6 4 3 13 8 18L12 22L33 44C37 47 44 41 41 36L20 14C22 8 18 3 14 3L19 9L14 14L8 9" fill="#f4f4f4" stroke="#333" strokeWidth="1.500" /><path d="M20 28L33 44C37 47 44 41 41 36L27 21Z" fill="#e6c35c" stroke="#333" strokeWidth="1.500" /></Svg></div>
      </div>
      <div className="flex h-[45px] items-center rounded-[5px] border-2 border-[#3a3a3a] bg-[#b0b0b0] pl-[16px] pr-[14px]">
        <svg width="26" height="26" viewBox="0 0 26 26" className="block shrink-0"><circle cx="10" cy="10" r="8" fill="none" stroke="#8d8d8d" strokeWidth="2.500" /><path d="M16 16L24 24" stroke="#8d8d8d" strokeWidth="3.500" /></svg>
        <span className="ml-[19px] flex-1 text-[25.700px] text-[#161616]">rep</span>
        <svg width="26" height="20" viewBox="0 0 26 20" className="block shrink-0"><path d="M8 0H26V20H8L0 10Z" fill="#8f8f8f" /><path d="M12 5L21 15M21 5L12 15" stroke="#fff" strokeWidth="3" /></svg>
      </div>
      <div className="mt-[3px] flex h-[1078px] overflow-hidden rounded-[4px] border-2 border-[#3a3a3a] bg-[#b0b0b0]">
        <div className="min-w-0 flex-1 pt-[1px]">
          {toolRows.map((r, i) => (
            <ToolRow key={i} {...r} />
          ))}
        </div>
        <Scrollbar thumb="h-[916px]" />
      </div>
    </>
  );
}

const Label = ({ w, t }: { w: string; t: string }) => (
  <span className={`whitespace-nowrap text-center text-[22px] text-[#1c1c1c] ${w}`}>{t}</span>
);
const DarkBox = ({ w, ml, t, spin, combo }: { w: string; ml: string; t: string; spin?: boolean; combo?: boolean }) => (
  <div className={`flex h-[46px] shrink-0 items-center rounded-[5px] border-x border-b-[2px] border-t-[3px] border-b-[#2a2a2a] border-t-[#2a2a2a] border-x-[#333] bg-[#414141] pl-[9px] pr-[6px] text-[22px] text-[#aeaeae] ${w} ${ml}`}>
    <span className="flex-1">{t}</span>
    {spin && (
      <svg width="14" height="34" viewBox="0 0 14 34" className="block"><path d="M3 9L7 2L11 9ZM3 25L11 25L7 32Z" fill="#bdbdbd" /></svg>
    )}
    {combo && <svg width="10" height="10" viewBox="0 0 10 10" className="block"><path d="M0 1H10L5 10Z" fill="#bdbdbd" /></svg>}
  </div>
);

function StatusBar() {
  return (
    <div className="flex h-[61px] items-center pl-[9px] pt-[1px]">
      <div className="flex h-[46px] w-[426px] shrink-0 items-center rounded-[5px] border-2 border-[#3a3a3a] bg-[#b0b0b0] pl-[16px]">
        <svg width="26" height="26" viewBox="0 0 26 26" className="block shrink-0"><circle cx="10" cy="10" r="8" fill="none" stroke="#8d8d8d" strokeWidth="2.500" /><path d="M16 16L24 24" stroke="#8d8d8d" strokeWidth="3.500" /></svg>
        <span className="ml-[17px] whitespace-nowrap text-[25.700px] text-[#555]">Type to locate (⌘K)</span>
      </div>
      <div className="ml-[691px]"><Label w="block w-[111px]" t="Coordinate" /></div>
      <div className="ml-[12px] flex h-[46px] w-[212px] shrink-0 items-center justify-center rounded-[5px] border-b-[3px] border-t-[2px] border-[#3a3a3a] bg-[#b0b0b0] text-[22px] text-[#1c1c1c]">77.7255,12.8327</div>
      <div className="ml-[12px] w-[24px]"><svg width="24" height="34" viewBox="0 0 24 34" className="block"><ellipse cx="8" cy="9" rx="6" ry="7" fill="#fff" stroke="#111" strokeWidth="2" /><ellipse cx="12" cy="24" rx="8" ry="8" fill="#fff" stroke="#111" strokeWidth="2" /><path d="M4 4L16 30M14 6L10 18" stroke="#111" strokeWidth="2" /><circle cx="21" cy="3" r="1.500" fill="#111" /></svg></div>
      <div className="ml-[34px]"><Label w="block w-[58px]" t="Scale" /></div>
      <DarkBox w="w-[202px]" ml="ml-[10px]" t="1:286561" combo />
      <div className="ml-[24px] w-[26px]"><svg width="26" height="38" viewBox="0 0 26 38" className="block"><path d="M6 18V10C6 2 20 2 20 10V18" fill="none" stroke="#dcdcdc" strokeWidth="3" /><rect x="3" y="18" width="20" height="18" rx="2" fill="#5a5a5a" /></svg></div>
      <div className="ml-[22px]"><Label w="block w-[97px]" t="Magnifier" /></div>
      <DarkBox w="w-[180px]" ml="ml-[11px]" t="100%" spin />
      <div className="ml-[22px]"><Label w="block w-[87px]" t="Rotation" /></div>
      <DarkBox w="w-[184px]" ml="ml-[21px]" t="0.0 °" spin />
      <div className="ml-[15px]"><Check /></div>
      <div className="ml-[15px]"><Label w="block w-[72px]" t="Render" /></div>
      <div className="ml-[18px] flex h-[47px] w-[190px] shrink-0 items-center rounded-[5px] border-2 border-[#3a3a3a] bg-[#a8a8a8] pl-[8px] text-[22px] text-[#1c1c1c]">
        <Svg s={30}><WireGlobe cx={24} cy={24} r={20} st="#555" /></Svg>
        <span className="ml-[6px]">EPSG:4326</span>
      </div>
      <div className="ml-[27px]"><svg width="32" height="32" viewBox="0 0 32 32" className="block"><path d="M16 2C8 2 2 7 2 14C2 21 8 26 16 26C19 26 24 30 28 31L26 24C29 21 30 18 30 14C30 7 24 2 16 2Z" fill="#636363" /></svg></div>
    </div>
  );
}

export default function App() {
  return (
    <div className={`h-[1576px] w-[2880px] overflow-hidden bg-white ${UI}`}>
      <div className="flex h-full flex-col overflow-hidden rounded-[20px] bg-[#707070]">
        <header className="flex h-[56px] shrink-0 items-center border-b-2 border-[#555] bg-[#e7e6eb] pl-[16px]">
          <div className="h-[23px] w-[23px] rounded-full border border-[#bbb] bg-[#d0cfd4]" />
          <div className="ml-[17px] h-[23px] w-[23px] rounded-full border border-[#bbb] bg-[#d0cfd4]" />
          <div className="ml-[17px] h-[23px] w-[23px] rounded-full border border-[#bbb] bg-[#d0cfd4]" />
          <div className="ml-[1161px] whitespace-nowrap text-[27px] font-semibold text-[#a6a6ab] [font-family:'Liberation_Sans',sans-serif]">*Untitled Project — QGIS</div>
        </header>
        <div className="h-[238px] shrink-0">
          <TopRow1 />
          <TopRow2 />
          <TopRow3 />
        </div>
        <div className="flex h-[1221px] shrink-0">
          <aside className="ml-[2px] mr-[15px] w-[620px] shrink-0">
            <BrowserPanel />
            <LayersPanel />
          </aside>
          <MapCanvas />
          <aside className="ml-[17px] mr-[2px] w-[621px] shrink-0">
            <ToolboxPanel />
          </aside>
        </div>
        <StatusBar />
      </div>
    </div>
  );
}
